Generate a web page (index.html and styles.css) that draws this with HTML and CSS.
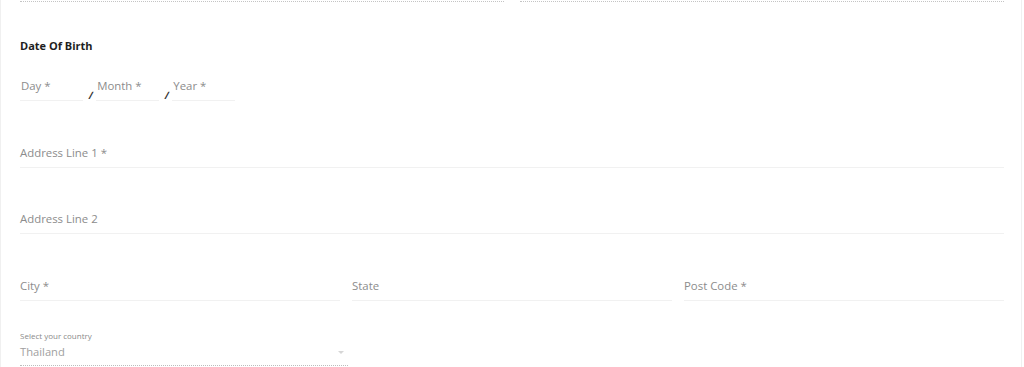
FILE: index.html
```html
<!DOCTYPE html>
<html>
<head>
<meta charset="utf-8">
<link rel="stylesheet" href="styles.css">
</head>
<body>
<div class="page">
  <div class="top-row">
    <div class="dotted-field"></div>
    <div class="dotted-field"></div>
  </div>

  <h3 class="section-title">Date Of Birth</h3>
  <div class="dob-row">
    <div class="field dob-field"><span class="label">Day *</span></div>
    <span class="slash">/</span>
    <div class="field dob-field"><span class="label">Month *</span></div>
    <span class="slash">/</span>
    <div class="field dob-field"><span class="label">Year *</span></div>
  </div>

  <div class="field full addr1"><span class="label">Address Line 1 *</span></div>
  <div class="field full addr2"><span class="label">Address Line 2</span></div>

  <div class="three-row">
    <div class="field"><span class="label">City *</span></div>
    <div class="field"><span class="label">State</span></div>
    <div class="field"><span class="label">Post Code *</span></div>
  </div>

  <div class="country">
    <div class="country-label">Select your country</div>
    <div class="country-select">
      <span class="country-value">Thailand</span>
      <span class="caret"></span>
    </div>
  </div>
</div>
</body>
</html>
```

FILE: styles.css
```css
html, body {
  margin: 0;
  padding: 0;
  background: #ffffff;
}

body {
  font-family: "Open Sans", "Liberation Sans", sans-serif;
  overflow: hidden;
}

.page {
  width: 1022px;
  height: 367px;
  box-sizing: border-box;
  border-left: 1px solid #f0f0f0;
  border-right: 1px solid #f0f0f0;
  padding: 0 17px 0 19px;
}

.top-row {
  display: flex;
  gap: 16px;
}

.dotted-field {
  flex: 1;
  height: 1px;
  border-bottom: 1px dotted #c4c4c4;
}

.section-title {
  margin: 36px 0 0;
  font-size: 11px;
  line-height: 16px;
  font-weight: 700;
  color: #1e1e1e;
}

.field {
  border-bottom: 1px solid #f1f1f1;
  padding-bottom: 6px;
}

.label {
  display: block;
  font-size: 11.4px;
  line-height: 16px;
  color: #8c8c8c;
}

.dob-row {
  display: flex;
  align-items: flex-end;
  margin-top: 24px;
}

.dob-field {
  width: 62px;
  padding-left: 1px;
}

.slash {
  font-size: 10px;
  line-height: 10px;
  font-weight: 700;
  color: #333;
  margin: 0 3px 1px 6px;
  transform: skewX(-10deg);
}

.addr1 {
  margin-top: 44px;
}

.addr2 {
  margin-top: 43px;
}

.three-row {
  display: flex;
  gap: 12px;
  margin-top: 44px;
}

.three-row .field {
  flex: 1;
}

.country {
  width: 328px;
  margin-top: 30px;
  border-bottom: 1px dotted #bdbdbd;
}

.country-label {
  font-size: 8px;
  line-height: 10px;
  color: #8a8a8a;
}

.country-select {
  display: flex;
  align-items: center;
  justify-content: space-between;
  margin-top: 3px;
  padding-bottom: 5px;
}

.country-value {
  font-size: 11.2px;
  line-height: 16px;
  color: #a0a0a0;
}

.caret {
  width: 0;
  height: 0;
  border-left: 3px solid transparent;
  border-right: 3px solid transparent;
  border-top: 3px solid #d6d6d6;
  margin-right: 4px;
}
```
